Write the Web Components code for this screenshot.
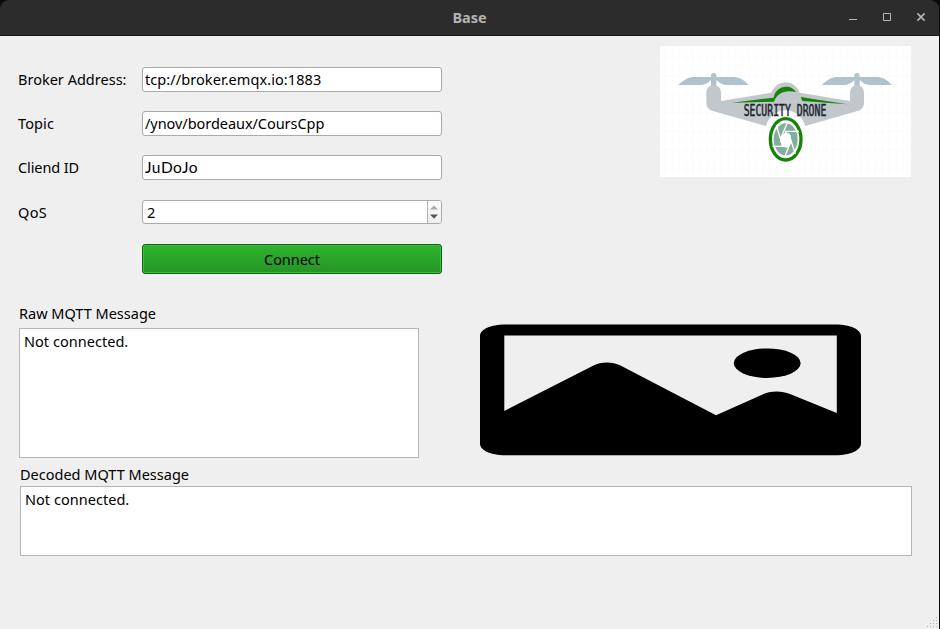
<!DOCTYPE html>
<html lang="en">
<head>
<meta charset="utf-8">
<title>Base</title>
<style>
html,body{margin:0;height:100%;background:#0c0c0c;overflow:hidden}
body{font:14.5px/20px "Noto Sans","Open Sans",sans-serif;color:#000}
</style>
</head>
<body>
<app-window></app-window>
<script>
const define = (name, html, setup) => customElements.define(name, class extends HTMLElement {
  connectedCallback() {
    if (this.shadowRoot) return;
    const t = document.createElement('template');
    t.innerHTML = html;
    this.attachShadow({mode: 'open'}).append(t.content.cloneNode(true));
    if (setup) setup(this, this.shadowRoot);
  }
});

// Text run set to an exact advance width through letter spacing.
define('fit-text', `<style>:host{display:inline-block;white-space:pre}span{display:inline-block}</style><span></span>`, (el, root) => {
  const span = root.querySelector('span');
  span.textContent = el.getAttribute('text');
  const target = +el.getAttribute('w');
  const natural = span.getBoundingClientRect().width;
  span.style.letterSpacing = (target - natural) / span.textContent.length + 'px';
});

define('title-bar', `<style>
:host{display:grid;grid-template-columns:1fr auto 1fr;align-items:center;height:35px;background:#2c2c2c;border-bottom:1px solid #191919;border-radius:9px 9px 0 0;color:#b4b4b4;font-weight:700}
fit-text{grid-column:2;padding-bottom:2px}
svg{justify-self:end;display:block}
</style><fit-text text="Base" w="34"></fit-text>
<svg width="100" height="35" viewBox="839 0 100 35" fill="none" stroke="#b8b8b8"><path d="M849 19.5h8M883.5 13.5h7v7h-7z"/><path d="M917.4 13.4l7.2 7.2M924.6 13.4l-7.2 7.2" stroke-width="1.5"/></svg>`);

define('text-input', `<style>
:host{display:flex;align-items:center;box-sizing:border-box;height:25px;background:#fff;border:1px solid #aaa;border-radius:3px;padding:0 0 2px 2px}
</style><slot></slot>`);

define('spin-box', `<style>
:host{display:flex;box-sizing:border-box;height:24px;background:#fff;border:1px solid #aaa;border-radius:3px;overflow:hidden}
div{flex:1;padding:1px 0 0 4px}
svg{display:block;background:linear-gradient(#fcfcfc,#eee);border-left:1px solid #b2b2b2}
</style><div><slot></slot></div>
<svg width="13" height="22" viewBox="0 0 13 22"><path d="M2 8.500h8L6 4.400z" fill="#aaa"/><path d="M2 13.500h8l-4 4.200z" fill="#555"/></svg>`);

define('push-button', `<style>
:host{display:flex;justify-content:center;align-items:center;box-sizing:border-box;height:30px;border:1px solid #0b6a10;border-radius:3px;background:linear-gradient(#2db42d,#269426);box-shadow:inset 0 0 0 1px #43b943}
</style><slot></slot>`);

define('message-box', `<style>
:host{display:flex;flex-direction:column}
header{box-sizing:border-box;height:var(--head);padding-bottom:var(--lift);display:flex;align-items:center}
section{box-sizing:border-box;border:1px solid #b5b5b5;background:#fff;width:var(--bw);height:var(--bh);padding:2px 4px}
</style><header><slot name="label"></slot></header><section><slot></slot></section>`);

define('drone-logo', `<style>:host{display:block;width:251px;height:131px}svg{display:block}</style>
<svg width="251" height="131" viewBox="15 18 753 393" preserveAspectRatio="none">
<defs><pattern id="g" x="20" y="41" width="21" height="55.3" patternUnits="userSpaceOnUse"><circle cx="10.5" cy="12" r="1.5" fill="#e2e2e2"/><path d="M0 12h21M10.5 0v55.3" stroke="#f9f9f9" stroke-width="2"/></pattern></defs>
<path fill="#fff" d="M15 18h753v393H15z"/><path fill="url(#g)" d="M15 18h753v393H15z"/>
<g fill="#afc2ce"><path d="M70 135C88 119 100 111 118 111h50v-4a8 8 0 0 1 16 0v4h48c20 0 33 7 49 24h-60c-18 0-28-6-37-15v20h-16v-20c-9 10-19 15-36 15z"/></g>
<g fill="#afc2ce" transform="translate(430 0)"><path d="M70 135C88 119 100 111 118 111h50v-4a8 8 0 0 1 16 0v4h48c20 0 33 7 49 24h-60c-18 0-28-6-37-15v20h-16v-20c-9 10-19 15-36 15z"/></g>
<path fill="#c1c7cb" d="M154 160c0-16 9-24 22-24s22 8 22 24v23l151-25c10-21 25-31 43-31s34 11 42 31l151 25v-23c0-16 9-24 21-24s21 8 21 24v26c0 16-8 25-22 28l-154 44c-8-27-32-47-59-47s-51 18-59 47l-157-44c-14-4-22-12-22-28z"/>
<g fill="#178207"><path d="M230 188l126-15c4-21 18-33 38-33 14 0 22 6 29 16-34-8-57 3-66 29z"/><path d="M437 171l139 22-134-10z"/></g>
<ellipse cx="392" cy="298" rx="46" ry="62" fill="#fff" stroke="#178207" stroke-width="10"/>
<ellipse cx="392" cy="298" rx="36" ry="48" fill="#82af9d"/>
<path fill="#fff" d="M392 275l15 11 2 23-13 15-16-6-6-24z"/>
<path fill="none" stroke="#fff" stroke-width="4" d="M398 246l-22 52M432 274h-42M421 342l-20-62M388 354l21-54M352 319h44M364 255l19 64"/>
<text x="266" y="227" font-family="DejaVu Sans Mono" font-size="47" fill="#20242e" stroke="#20242e" stroke-width="1.6" textLength="248" lengthAdjust="spacingAndGlyphs">SECURITY DRONE</text>
</svg>`);

define('landscape-icon', `<style>:host{display:block}svg{display:block}</style>
<svg width="381" height="132" viewBox="480 324 381 132">
<path fill-rule="evenodd" d="M505 324.4h331c14 0 25 5 25 11.5v107.8c0 6.500-11 11.500-25 11.500H505c-14 0-25-5-25-11.500V335.900c0-6.500 11-11.500 25-11.500zM504.300 335.400v75.500l89.200-45.500c7.500-4 19-4 27 0L716 415.300l46-20.500c8-4.300 20-4.300 28-.8l46.800 19v-77.600z"/><ellipse cx="767.200" cy="363.200" rx="33.400" ry="14.800"/></svg>`);

define('size-grip', `<style>:host{display:block}svg{display:block}</style>
<svg width="12" height="12" fill="#b5b5b5"><path d="M9 0h1v1H9zM6 3h1v1H6zM9 3h1v1H9zM3 6h1v1H3zM6 6h1v1H6zM9 6h1v1H9zM0 9h1v1H0zM3 9h1v1H3zM6 9h1v1H6zM9 9h1v1H9z"/></svg>`);

define('app-window', `<style>
:host{display:flex;flex-direction:column;height:629px;width:939px;background:#0c0c0c}
main{flex:1;background:#efefef;display:flex;flex-direction:column;box-sizing:border-box;padding-left:18px}
.top{display:flex;justify-content:space-between;align-items:flex-start;height:266px}
form{margin:0;padding-top:31px;display:grid;row-gap:19px}
.row{display:grid;grid-template-columns:124px 300px;align-items:center}
.row>fit-text{padding-bottom:2px}.row.spin>fit-text{padding-bottom:0}
.row.spin{padding-top:1px}.row.spin,.row.btn{margin-bottom:1px}
.lato{font-family:Lato,"Noto Sans",sans-serif;font-size:15.5px}
push-button{grid-column:2}
drone-logo{margin:10px 28px 0 0}
.mid{display:flex;align-items:flex-start;height:161px;padding-left:1px}
.mid message-box{--head:26px;--lift:4px;--bw:400px;--bh:130px}
landscape-icon{margin:22px 0 0 61px}
.low{--head:23px;--lift:2px;--bw:892px;--bh:70px;padding-left:2px}
size-grip{margin:auto 0 0 auto}
</style>
<title-bar></title-bar>
<main>
<div class="top"><form>
<div class="row"><fit-text text="Broker Address:" w="108.500"></fit-text><text-input><fit-text text="tcp://broker.emqx.io:1883" w="176.300"></fit-text></text-input></div>
<div class="row"><fit-text text="Topic" w="36"></fit-text><text-input><fit-text text="/ynov/bordeaux/CoursCpp" w="179.300"></fit-text></text-input></div>
<div class="row"><fit-text text="Cliend ID" w="61"></fit-text><text-input><fit-text class="lato" text="JuDoJo" w="53"></fit-text></text-input></div>
<div class="row spin"><fit-text text="QoS" w="29"></fit-text><spin-box><fit-text text="2" w="9"></fit-text></spin-box></div>
<div class="row btn"><push-button><fit-text text="Connect" w="56"></fit-text></push-button></div>
</form><drone-logo></drone-logo></div>
<div class="mid"><message-box><fit-text slot="label" text="Raw MQTT Message" w="137"></fit-text><fit-text text="Not connected." w="104.300"></fit-text></message-box><landscape-icon></landscape-icon></div>
<message-box class="low"><fit-text slot="label" text="Decoded MQTT Message" w="169"></fit-text><fit-text text="Not connected." w="104.300"></fit-text></message-box>
<size-grip></size-grip>
</main>`);
</script>
</body>
</html>
